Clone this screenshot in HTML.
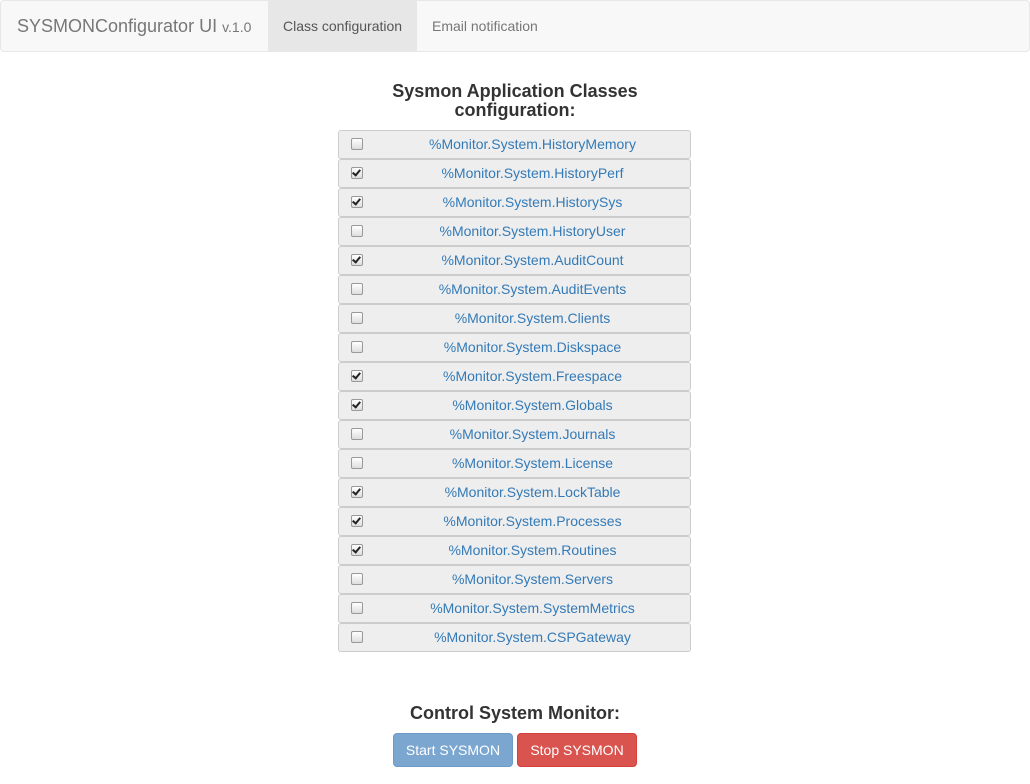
<!DOCTYPE html>
<html><head><style>
body{margin:0;font-family:"Liberation Sans",sans-serif;font-size:14px;color:#333;background:#fff;width:1030px;height:784px;overflow:hidden}
.nav{position:absolute;left:0;top:0;width:1028px;height:50px;background:#f8f8f8;border:1px solid #e7e7e7;border-radius:4px}
.brand{position:absolute;left:16px;top:15px;font-size:18px;color:#777;white-space:nowrap}
.brand small{font-size:14px}
.tab{position:absolute;top:0;height:50px;line-height:51px;color:#777;font-size:14px;padding:0 15px;white-space:nowrap}
h3{position:absolute;margin:0;font-size:18px;font-weight:bold;text-align:center;width:1030px;left:0;line-height:19px}
.row{position:absolute;left:338px;width:351px;height:27px;background:#eee;border:1px solid #ccc;border-radius:3px}
.row .cb{position:absolute;left:12px;top:7px;width:10px;height:10px;border:1px solid #999;border-radius:2px;background:linear-gradient(#fff,#ddd)}
.row .cb.c::after{content:"";position:absolute;left:2px;top:0px;width:3px;height:6px;border:solid #222;border-width:0 2px 2px 0;transform:rotate(40deg)}
.row span{position:absolute;left:36px;right:0;top:5px;text-align:center;color:#337ab7;font-size:14px}
.btn{position:absolute;top:733px;height:32px;line-height:33px;color:#fff;text-align:center;border-radius:4px;font-size:14px}
</style></head><body>
<div class="nav">
<div class="brand">SYSMONConfigurator UI <small>v.1.0</small></div>
<div class="tab" style="left:267px;width:119px;background:#e7e7e7;color:#555">Class configuration</div>
<div class="tab" style="left:416px">Email notification</div>
</div>
<h3 style="top:82px">Sysmon Application Classes<br>configuration:</h3>
<div class="row" style="top:130px"><div class="cb"></div><span>%Monitor.System.HistoryMemory</span></div>
<div class="row" style="top:159px"><div class="cb c"></div><span>%Monitor.System.HistoryPerf</span></div>
<div class="row" style="top:188px"><div class="cb c"></div><span>%Monitor.System.HistorySys</span></div>
<div class="row" style="top:217px"><div class="cb"></div><span>%Monitor.System.HistoryUser</span></div>
<div class="row" style="top:246px"><div class="cb c"></div><span>%Monitor.System.AuditCount</span></div>
<div class="row" style="top:275px"><div class="cb"></div><span>%Monitor.System.AuditEvents</span></div>
<div class="row" style="top:304px"><div class="cb"></div><span>%Monitor.System.Clients</span></div>
<div class="row" style="top:333px"><div class="cb"></div><span>%Monitor.System.Diskspace</span></div>
<div class="row" style="top:362px"><div class="cb c"></div><span>%Monitor.System.Freespace</span></div>
<div class="row" style="top:391px"><div class="cb c"></div><span>%Monitor.System.Globals</span></div>
<div class="row" style="top:420px"><div class="cb"></div><span>%Monitor.System.Journals</span></div>
<div class="row" style="top:449px"><div class="cb"></div><span>%Monitor.System.License</span></div>
<div class="row" style="top:478px"><div class="cb c"></div><span>%Monitor.System.LockTable</span></div>
<div class="row" style="top:507px"><div class="cb c"></div><span>%Monitor.System.Processes</span></div>
<div class="row" style="top:536px"><div class="cb c"></div><span>%Monitor.System.Routines</span></div>
<div class="row" style="top:565px"><div class="cb"></div><span>%Monitor.System.Servers</span></div>
<div class="row" style="top:594px"><div class="cb"></div><span>%Monitor.System.SystemMetrics</span></div>
<div class="row" style="top:623px"><div class="cb"></div><span>%Monitor.System.CSPGateway</span></div>
<h3 style="top:704px">Control System Monitor:</h3>
<div class="btn" style="left:393px;width:118px;background:#7aa6cf;border:1px solid #6d9bc5">Start SYSMON</div>
<div class="btn" style="left:517px;width:118px;background:#d9534f;border:1px solid #d43f3a">Stop SYSMON</div>
</body></html>
